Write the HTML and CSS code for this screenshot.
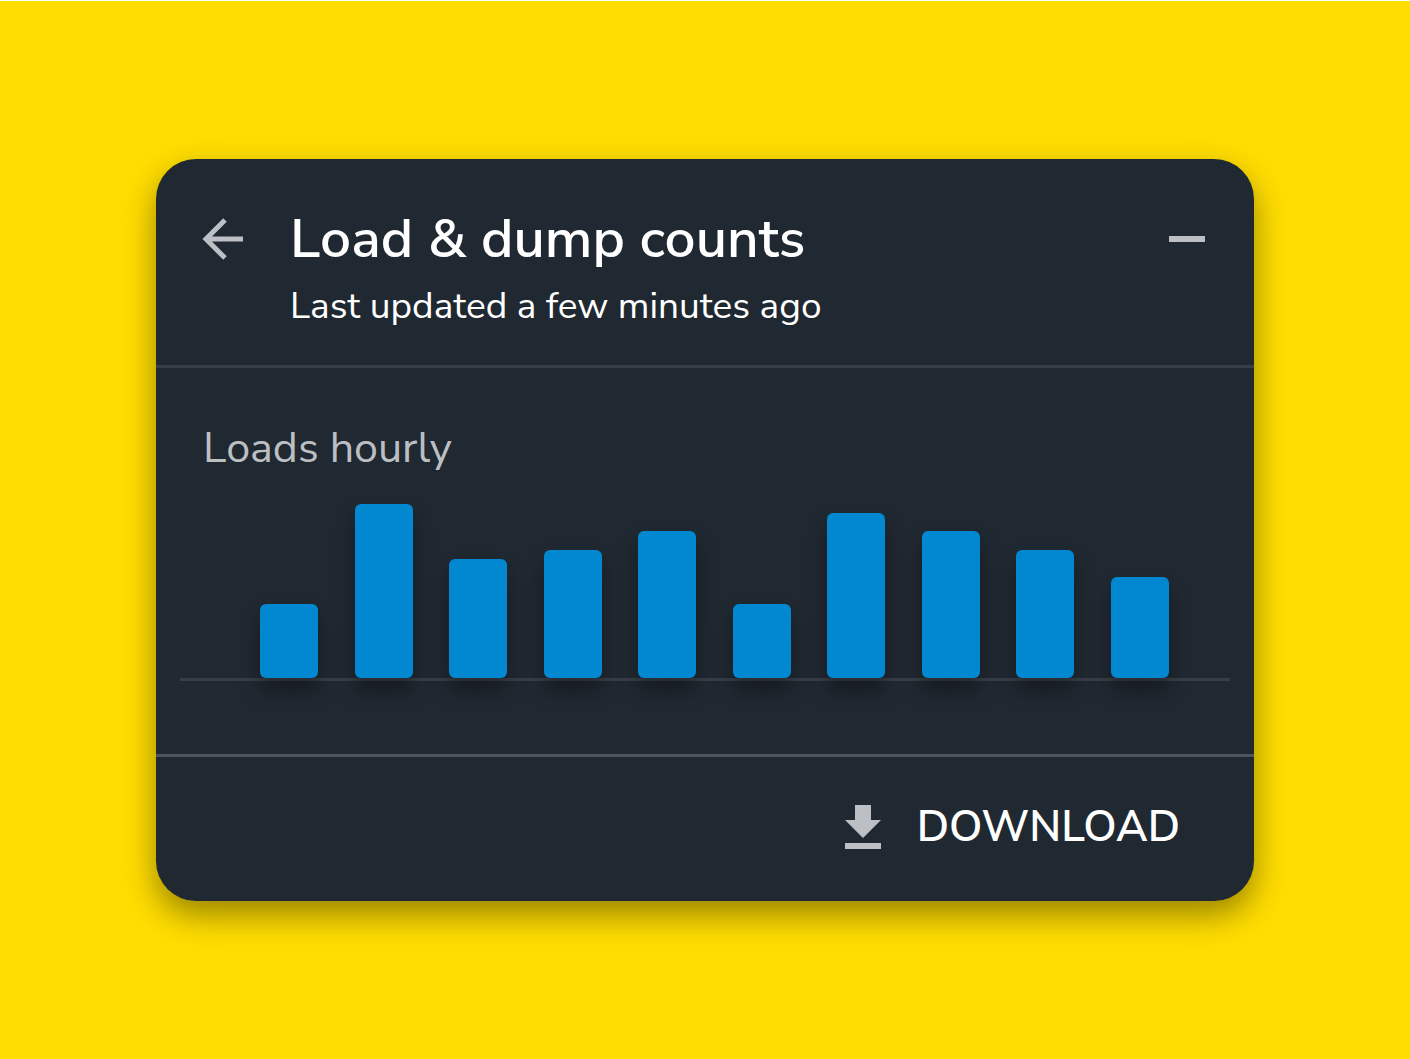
FILE: index.html
```html
<!DOCTYPE html>
<html lang="en">
<head>
    <meta charset="UTF-8">
    <meta name="viewport" content="width=device-width, initial-scale=1.0">
    <title>Load &amp; dump counts</title>
    <link rel="stylesheet" href="styles.css">
</head>
<body>
    <main class="card">
        <header class="card-header">
            <button class="icon-btn" type="button" aria-label="Back">
                <svg class="icon-back" viewBox="0 0 42 42" aria-hidden="true">
                    <path d="M23 2 L4 21 L23 40 M4 21 H41" />
                </svg>
            </button>
            <div class="heading">
                <h1>Load &amp; dump counts</h1>
                <p>Last updated a few minutes ago</p>
            </div>
            <button class="icon-btn" type="button" aria-label="Minimise">
                <svg class="icon-minus" viewBox="0 0 36 42" aria-hidden="true">
                    <rect x="0" y="18" width="36" height="6" />
                </svg>
            </button>
        </header>

        <section class="chart">
            <h2>Loads hourly</h2>
            <div class="bars">
                <div class="bar" style="height: 74px"></div>
                <div class="bar" style="height: 174px"></div>
                <div class="bar" style="height: 119px"></div>
                <div class="bar" style="height: 128px"></div>
                <div class="bar" style="height: 147px"></div>
                <div class="bar" style="height: 74px"></div>
                <div class="bar" style="height: 165px"></div>
                <div class="bar" style="height: 147px"></div>
                <div class="bar" style="height: 128px"></div>
                <div class="bar" style="height: 101px"></div>
            </div>
        </section>

        <footer class="card-footer">
            <button class="download-btn" type="button">
                <svg class="icon-download" viewBox="0 0 36 44" aria-hidden="true">
                    <path d="M10 0 H26 V15 H36 L18 33 L0 15 H10 Z" />
                    <rect x="0" y="38" width="36" height="6" />
                </svg>
                <span>DOWNLOAD</span>
            </button>
        </footer>
    </main>
</body>
</html>
```
FILE: styles.css
```css
* {
    box-sizing: border-box;
}
body {
    margin: 0;
    min-height: 100vh;
    padding: 24px 156px;
    display: flex;
    justify-content: center;
    align-items: center;
    border-top: 1px solid #fff;
    background-color: #ffdd00;
    color: #fff;
    font-family: "Nunito Sans", Nunito, Lato, sans-serif;
}
h1, h2, p {
    margin: 0;
}
button {
    padding: 0;
    border: none;
    background: none;
    color: inherit;
    font-family: inherit;
    cursor: pointer;
}
svg {
    display: block;
    fill: #bcc0c4;
}
.card {
    flex: 1;
    max-width: 1098px;
    border-radius: 40px;
    background-color: #202831;
    box-shadow: 0 14px 32px rgba(0, 0, 0, 0.4);
}

/* Header */
.card-header {
    display: flex;
    align-items: flex-start;
    padding: 45px 49px 32px 46px;
    border-bottom: 3px solid #383e48;
}
.icon-btn {
    padding: 14px 0;
}
.icon-back {
    width: 42px;
    height: 42px;
    fill: none;
    stroke: #bcc0c4;
    stroke-width: 5;
}
.icon-minus {
    width: 36px;
    height: 42px;
}
.heading {
    flex: 1;
    padding-left: 46px;
}
h1 {
    font-size: 55px;
    line-height: 70px;
    font-weight: 600;
}
.heading p {
    padding-top: 5px;
    font-size: 37px;
    line-height: 54px;
}

/* Chart */
.chart {
    padding: 48px 24px 73px;
    border-bottom: 3px solid #4d545e;
}
h2 {
    padding-left: 23px;
    color: #bcbfc2;
    font-size: 43px;
    line-height: 64px;
    font-weight: 400;
}
.bars {
    display: flex;
    justify-content: space-between;
    align-items: flex-end;
    height: 201px;
    padding: 0 61px 0 80px;
    border-bottom: 3px solid #383e48;
}
.bar {
    width: 58px;
    border-radius: 6px;
    background-color: #0288d1;
    box-shadow: 0 12px 20px rgba(0, 0, 0, 0.35);
}

/* Footer */
.card-footer {
    display: flex;
    justify-content: flex-end;
    padding: 34px 74px 38px;
}
.download-btn {
    display: flex;
    align-items: center;
    gap: 36px;
    font-size: 43px;
    line-height: 72px;
    font-weight: 600;
}
.icon-download {
    width: 36px;
    height: 44px;
}
```
